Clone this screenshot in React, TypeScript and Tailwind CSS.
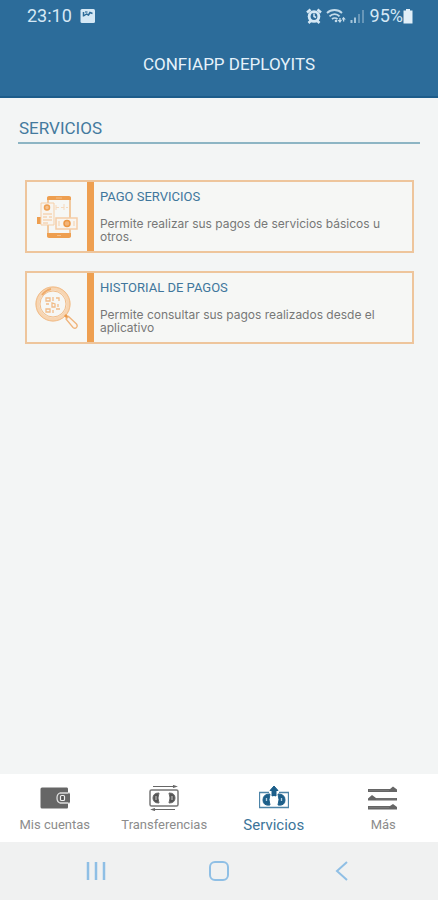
import type { ReactNode } from "react"
import clsx from "clsx"

type Servicio = {
    title: string
    description: string
    icon: ReactNode
}

type Tab = {
    label: string
    icon: ReactNode
    active?: boolean
}

/* ---------- Status bar icons ---------- */

function PictureIcon() {
    return (
        <svg viewBox="0 0 16 16" className="h-4 w-4" aria-hidden="true">
            <rect x="0.5" y="1" width="14.5" height="14" rx="1.5" fill="#d5e8f5"/>
            <path d="M3.500 8.500V4M3.500 8l3-2 2 1L10 4.500l2.500 1" fill="none" stroke="#2c6a98" strokeWidth="1.5"/>
            <path d="M5 4h2.5" stroke="#2c6a98" strokeWidth="1.2"/>
        </svg>
    )
}

function AlarmIcon() {
    return (
        <svg viewBox="0 0 16 16" className="h-4 w-4" aria-hidden="true">
            <path d="M1 4.500 4.500 1.500M15 4.500 11.500 1.500M2.500 15l3-3M13.500 15l-3-3" stroke="#d5e8f5" strokeWidth="2.500"/>
            <circle cx="8" cy="8.500" r="6.300" fill="#d5e8f5"/>
            <circle cx="8" cy="8.500" r="3.400" fill="#2c6a98"/>
            <path d="M8 5.500v3l2 1" fill="none" stroke="#d5e8f5" strokeWidth="1.500"/>
        </svg>
    )
}

function WifiIcon() {
    return (
        <svg viewBox="0 0 20 16" className="h-4 w-5" fill="none" stroke="#c3dbea" strokeWidth="1.800" aria-hidden="true">
            <path d="M1 5C5 1 12 1 16 5M3.500 8.300c3-3 7.500-3 10 0M6 11.200c1.500-1.500 4-1.500 5.500 0"/>
            <circle cx="10" cy="13" r="1.300" fill="#c3dbea" stroke="none"/>
            <path d="m11.500 12 2.500 3 2-3zM15.500 11.500l2-2.800 2.300 2.800z" fill="#c3dbea" stroke="none"/>
            <path d="M14 10v3M17.600 10v3.500" strokeWidth="1.300"/>
        </svg>
    )
}

function SignalIcon() {
    return (
        <svg viewBox="0 0 16 16" className="h-4 w-4" aria-hidden="true">
            <path d="M1.500 12v3M5 9.500V15" stroke="#a3c4da" strokeWidth="2"/>
            <path d="M9 6v9M13 2v13" stroke="#6796b8" strokeWidth="2"/>
        </svg>
    )
}

function BatteryIcon() {
    return (
        <svg viewBox="0 0 10 16" className="h-4 w-[10px]" aria-hidden="true">
            <path d="M3 1h4v1.500h2.500v13h-9v-13H3z" fill="#e2eff8"/>
        </svg>
    )
}

/* ---------- Card icons ---------- */

function PagoIcon() {
    return (
        <svg viewBox="0 0 42 44" className="h-11 w-[42px]" fill="none" aria-hidden="true">
            <path d="M12 2v40M34 2v40" stroke="#f0ba82" strokeWidth="1.500"/>
            <path d="M11 5V3q0-2 2-2h20q2 0 2 2v2zM11 38h24v3q0 2-2 2H13q-2 0-2-2z" fill="#ee9f50"/>
            <path d="M20 3h6M21 40.500h4" stroke="#f4bf89"/>
            <path d="M20 12.500h3M25 12.500h3M30 12.500h2M20 10v5M28 9v6" stroke="#f6d9bd"/>
            <path d="M1 22h5v7H1z" fill="#ee9f50"/>
            <path d="M5 8h13v22H5z" fill="#f8f5f0" stroke="#f5cfa8"/>
            <circle cx="11" cy="12.500" r="2.500" fill="#f5c18f" stroke="#ee9f50" strokeWidth="1.500"/>
            <path d="M7 19h9M7 22h4M13 22h3M7 25h9M7 28h5" stroke="#f3c496"/>
            <path d="M20 23h21v11H20z" fill="#f8f5f0" stroke="#f5cda6" strokeWidth="1.500"/>
            <circle cx="31" cy="28.500" r="3" fill="#f3b478" stroke="#eb9643" strokeWidth="1.500"/>
            <path d="M23 26v5M38 26v5" stroke="#f5cfa8"/>
        </svg>
    )
}

function HistorialIcon() {
    return (
        <svg viewBox="0 0 44 44" className="h-11 w-11" fill="none" aria-hidden="true">
            <circle cx="18" cy="18" r="15.500" stroke="#f7d5b2" strokeWidth="4"/>
            <circle cx="18" cy="18" r="17" stroke="#f1bc88"/>
            <circle cx="18" cy="18" r="13" stroke="#f1bc88"/>
            <path d="M7 9q4-5 9-6" stroke="#efab6a" strokeWidth="2"/>
            <path d="M11 12h4v3h-4zM18 11v4M21 12h3v3M11 18h3M17 17v4h3v-3zM23 18v3M11 23h4v3h-4zM18 24v3M21 23h4" stroke="#f1bc88" strokeWidth="1.300"/>
            <path d="m29 30 2-2 3 3-2 2z" fill="#ec9a4a"/>
            <path d="m31 33 2.500-2.500 8 7.500q1.500 2 0 3.500t-3.500 0z" fill="#faf5ef" stroke="#efb47b" strokeWidth="1.300"/>
        </svg>
    )
}

/* ---------- Tab icons ---------- */

function WalletIcon() {
    return (
        <svg viewBox="0 0 30 26" className="h-[26px] w-[30px]" aria-hidden="true">
            <path d="M2 2.500h25q1 0 1 1.500v18q0 1.500-1 1.500H2q-1.500 0-1.500-1.500V4q0-1.500 1.500-1.500z" fill="#666"/>
            <path d="M20 8h9.500v10H20q-3-1-3-5t3-5z" fill="#666" stroke="#ddd" strokeWidth="1.300"/>
            <path d="M28 8.500h2v9h-2z" fill="#666"/>
            <rect x="20.500" y="10.500" width="4" height="5" rx="1" fill="#555" stroke="#eee" strokeWidth="1.200"/>
        </svg>
    )
}

function TransferIcon() {
    return (
        <svg viewBox="0 0 30 26" className="h-[26px] w-[30px]" fill="none" stroke="#666" aria-hidden="true">
            <path d="M4 1.500h22M24 .5l3 1L24 2.500M4 24.500h22M6 23.500l-3 1 3 1" strokeWidth="1.200"/>
            <rect x="1" y="5" width="28" height="16" rx="1.500" stroke="#777" strokeWidth="1.500"/>
            <path d="M10 8q-6 0-6 5t6 5q-2-5 0-10zM20 8q6 0 6 5t-6 5q2-5 0-10z" fill="#555"/>
            <path d="M7 11v4M23 11v4" stroke="#ccc"/>
            <ellipse cx="15" cy="13" rx="4" ry="5.500" fill="#fff" stroke="none"/>
        </svg>
    )
}

function ServiciosIcon() {
    return (
        <svg viewBox="0 0 30 26" className="h-[26px] w-[30px]" fill="none" stroke="#1d5f8a" aria-hidden="true">
            <path d="M10 7.500H.5v15h29v-15H20" stroke="#4d84a8" strokeWidth="1.300"/>
            <path d="M11 9q-7 0-7 6t7 5q-2-5 0-11zM19 9q7 0 7 6t-7 5q2-5 0-11z" fill="#1d5f8a"/>
            <path d="M7.500 13v3M22.500 13v3" stroke="#b5d0e2" strokeWidth="1.300"/>
            <path d="m15 1 4 4.500h-2V11h-4V5.500h-2z" fill="#1d5f8a"/>
            <path d="M11.500 13.500q3.500-5 7 0v4q-3.500 5-7 0z" fill="#fff" stroke="none"/>
        </svg>
    )
}

function MasIcon() {
    return (
        <svg viewBox="0 0 30 26" className="h-[26px] w-[30px]" fill="#666" aria-hidden="true">
            <path d="M0 4h22l3-2.500L29 4.500V7H0zM0 15.500v-2L4 10l4 3h21v2.500zM0 21h22l3-2 4 3v2.500H0z"/>
            <path d="M1 5.500h20M8 14h20M1 22.500h20" stroke="#777"/>
        </svg>
    )
}

const servicios: Servicio[] = [
    {
        title: "PAGO SERVICIOS",
        description: "Permite realizar sus pagos de servicios básicos u otros.",
        icon: <PagoIcon/>,
    },
    {
        title: "HISTORIAL DE PAGOS",
        description: "Permite consultar sus pagos realizados desde el aplicativo",
        icon: <HistorialIcon/>,
    },
]

const tabs: Tab[] = [
    { label: "Mis cuentas", icon: <WalletIcon/> },
    { label: "Transferencias", icon: <TransferIcon/> },
    { label: "Servicios", icon: <ServiciosIcon/>, active: true },
    { label: "Más", icon: <MasIcon/> },
]

function StatusBar() {
    return (
        <div className="flex h-8 items-center justify-between pr-[25px] pl-[27px] text-lg text-[#d5e8f5]">
            <div className="flex items-center gap-2">
                <span>23:10</span>
                <PictureIcon/>
            </div>
            <div className="flex items-center gap-1">
                <AlarmIcon/>
                <WifiIcon/>
                <SignalIcon/>
                <div className="flex items-center">
                    <span>95%</span>
                    <BatteryIcon/>
                </div>
            </div>
        </div>
    )
}

function ServicioCard({ title, description, icon }: Servicio) {
    return (
        <button type="button" className="flex min-h-[73px] w-full border-2 border-[#eec59c] bg-[#f6f7f5] text-left">
            <span className="flex w-[60px] shrink-0 items-center justify-center self-stretch">{icon}</span>
            <span className="w-[7px] shrink-0 self-stretch bg-[#ee9f50]"/>
            <span className="flex flex-1 flex-col gap-3 pt-[7px] pr-4 pl-[6px]">
                <span className="text-[13px] leading-4 text-[#40769c]">{title}</span>
                <span className="font-['Inter'] text-[12px] leading-[13px] text-[#777]">{description}</span>
            </span>
        </button>
    )
}

/**
 * App
 *
 * Pantalla de servicios: cabecera, listado de servicios
 * y navegación inferior.
 */
export default function App() {
    return (
        <div className="flex min-h-screen flex-col bg-[#f3f5f5] font-['Roboto',sans-serif]">
            <header className="border-b-2 border-[#1d5c8a] bg-[#2c6c9a]">
                <StatusBar/>
                <h1 className="flex h-16 items-center justify-center pl-5 text-[17px] leading-6 text-[#e6f2fa]">
                    CONFIAPP DEPLOYITS
                </h1>
            </header>

            <main className="flex-1 px-[18px] pt-[18px]">
                <h2 className="border-b-2 border-[#8db5c4] pb-[2px] pl-px text-[17px] leading-6 text-[#447a9e]">
                    SERVICIOS
                </h2>
                <div className="flex flex-col gap-[18px] pt-9 pr-[6px] pl-[7px]">
                    {servicios.map((servicio) => (
                        <ServicioCard key={servicio.title} {...servicio}/>
                    ))}
                </div>
            </main>

            <nav className="grid h-[68px] grid-cols-4 bg-white">
                {tabs.map(({ label, icon, active }) => (
                    <button
                        key={label}
                        type="button"
                        aria-current={active ? "page" : undefined}
                        className={clsx(
                            "flex flex-col items-center pt-[11px]",
                            active ? "text-[15px] text-[#3c7499]" : "text-[13px] text-[#8c8c8c]",
                        )}
                    >
                        {icon}
                        <span className="leading-7">{label}</span>
                    </button>
                ))}
            </nav>

            {/* Android navigation */}
            <div className="grid h-[58px] grid-cols-3 bg-[#f0f1f1] px-[34px]">
                <button type="button" aria-label="Recientes" className="flex items-center justify-center">
                    <svg viewBox="0 0 20 20" className="h-5 w-5" stroke="#8fbfe5" strokeWidth="2.500">
                        <path d="M2 1v18M10 1v18M18 1v18"/>
                    </svg>
                </button>
                <button type="button" aria-label="Inicio" className="flex items-center justify-center">
                    <svg viewBox="0 0 20 20" className="h-5 w-5" fill="none" stroke="#8fbfe5" strokeWidth="2">
                        <rect x="1" y="1" width="18" height="18" rx="5"/>
                    </svg>
                </button>
                <button type="button" aria-label="Atrás" className="flex items-center justify-center">
                    <svg viewBox="0 0 20 20" className="h-5 w-5" fill="none" stroke="#8fbfe5" strokeWidth="2">
                        <path d="M15 1 5 10l10 9"/>
                    </svg>
                </button>
            </div>
        </div>
    )
}
